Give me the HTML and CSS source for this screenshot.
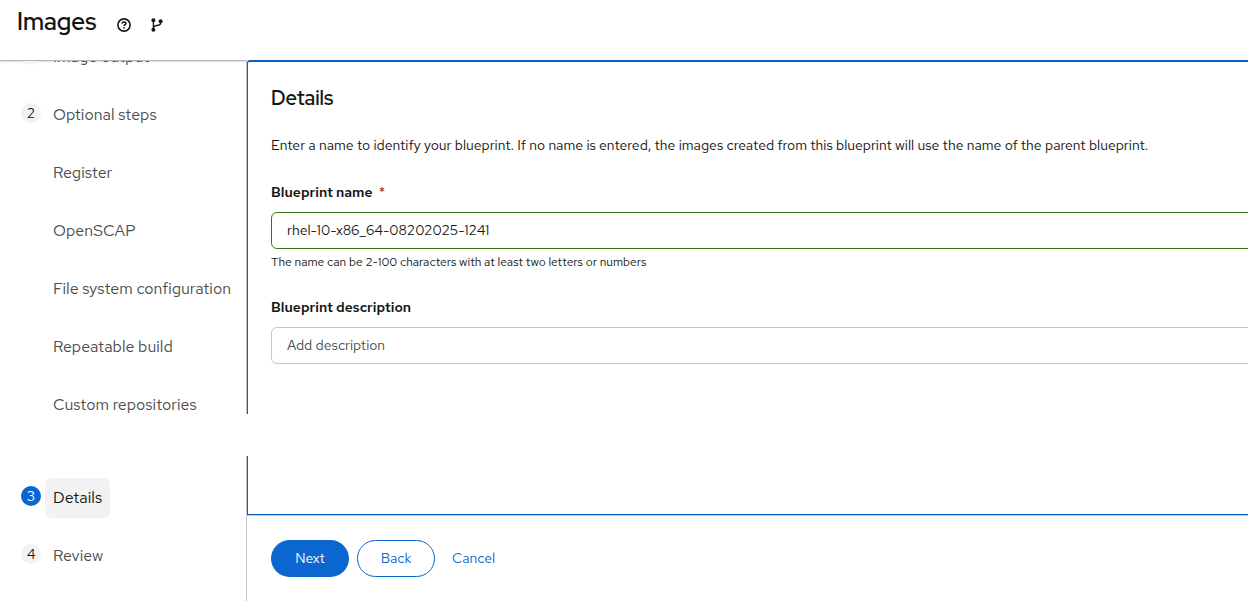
FILE: index.html
```html
<!DOCTYPE html>
<html lang="en">
<head>
<meta charset="utf-8">
<meta name="viewport" content="width=device-width, initial-scale=1">
<title>Images</title>
<link rel="stylesheet" href="styles.css">
</head>
<body>
<header class="masthead">
  <h1 class="masthead-title">Images</h1>
  <button class="icon-button" type="button" aria-label="About images">
    <svg width="14" height="14" viewBox="0 0 14 14" fill="none" stroke="currentColor">
      <circle cx="7" cy="7" r="6.1" stroke-width="1.6"/>
      <path d="M5.1 5.6C5.1 4.4 5.9 3.9 7 3.9S8.9 4.5 8.9 5.4C8.9 6.6 7 6.6 7 8.1" stroke-width="1.5"/>
      <circle cx="7" cy="9.8" r=".9" fill="currentColor" stroke="none"/>
    </svg>
  </button>
  <button class="icon-button" type="button" aria-label="Contribute">
    <svg width="12" height="14" viewBox="0 0 12 14" fill="none" stroke="currentColor">
      <path d="M2.4 2.4v9.2M9.6 3.6v1.2c0 1.6-.8 2.3-2.3 2.5L4.6 7.8C3.2 8 2.6 8.7 2.5 9.8" stroke-width="1.4"/>
      <g fill="currentColor" stroke="none"><circle cx="2.4" cy="2.2" r="2"/><circle cx="2.4" cy="11.8" r="2"/><circle cx="9.6" cy="3.2" r="2"/></g>
    </svg>
  </button>
</header>
<div class="wizard">
  <section class="row row-top">
    <nav class="steps" aria-label="Wizard steps">
      <ol class="step-list">
        <li class="step"><span class="step-number">1</span><a class="step-link" href="#output">Image output</a></li>
        <li class="step"><span class="step-number">2</span><a class="step-link" href="#optional">Optional steps</a></li>
        <li class="step substep"><a class="step-link" href="#register">Register</a></li>
        <li class="step substep"><a class="step-link" href="#openscap">OpenSCAP</a></li>
        <li class="step substep"><a class="step-link" href="#filesystem">File system configuration</a></li>
        <li class="step substep"><a class="step-link" href="#repeatable">Repeatable build</a></li>
        <li class="step substep"><a class="step-link" href="#repositories">Custom repositories</a></li>
      </ol>
    </nav>
    <main class="panel panel-top">
      <h2 class="panel-title">Details</h2>
      <p class="intro">Enter a name to identify your blueprint. If no name is entered, the images created from this blueprint will use the name of the parent blueprint.</p>
      <div class="field">
        <label class="label" for="name">Blueprint name <span class="required">*</span></label>
        <input class="input valid" id="name" type="text" value="rhel-10-x86_64-08202025-1241">
        <p class="helper">The name can be 2-100 characters with at least two letters or numbers</p>
      </div>
      <div class="field">
        <label class="label" for="description">Blueprint description</label>
        <input class="input" id="description" type="text" placeholder="Add description">
      </div>
    </main>
  </section>
  <section class="row row-bottom">
    <nav class="steps steps-end" aria-label="Final steps">
      <ol class="step-list">
        <li class="step"><span class="step-number current">3</span><a class="step-link active" href="#details" aria-current="step">Details</a></li>
        <li class="step"><span class="step-number">4</span><a class="step-link" href="#review">Review</a></li>
      </ol>
    </nav>
    <div class="side">
      <div class="panel panel-end"></div>
      <footer class="actions">
        <button class="button primary" type="button">Next</button>
        <button class="button secondary" type="button">Back</button>
        <button class="button link" type="button">Cancel</button>
      </footer>
    </div>
  </section>
</div>
</body>
</html>
```
FILE: styles.css
```css
* { box-sizing: border-box; }

body {
  margin: 0;
  background: #fff;
  color: #151515;
  font-family: "Red Hat Text", Roboto, "Liberation Sans", sans-serif;
  font-size: 14px;
  line-height: 21px;
  overflow: hidden;
}

h1, h2, p, ol { margin: 0; padding: 0; font-weight: 400; }
input, button { font: inherit; }

.masthead {
  display: flex;
  align-items: center;
  height: 60px;
  padding: 0 17px 16px;
}
.masthead-title {
  margin-right: 21px;
  font-family: "Red Hat Display", "Red Hat Text", Roboto, sans-serif;
  font-size: 24px;
  line-height: 32px;
  font-weight: 600;
}
.icon-button {
  display: flex;
  margin: 6px 20px 0 0;
  padding: 0;
  border: 0;
  background: none;
  color: #151515;
}

.wizard {
  display: flex;
  flex-direction: column;
  gap: 42px;
  min-height: calc(100vh - 60px);
}
.row {
  display: grid;
  grid-template-columns: 247px minmax(0, 1fr);
}
.row-bottom { flex: 1; }

.steps {
  padding-left: 21px;
  border-right: 1px solid #c7c7c7;
}
.row-top .steps {
  border-top: 1px solid #b5b5b5;
  box-shadow: inset 0 2px 2px -1px #ddd;
  overflow: hidden;
}
.step-list {
  display: flex;
  flex-direction: column;
  gap: 40px;
  list-style: none;
}
.row-top .step-list { margin-top: -13px; }
.steps-end { padding-top: 33px; }

.step {
  display: flex;
  align-items: center;
  gap: 4px;
  height: 18px;
}
.substep { padding-left: 24px; }
.step-number {
  width: 20px;
  height: 20px;
  flex: none;
  margin-bottom: 4px;
  border-radius: 50%;
  background: #f2f2f2;
  line-height: 20px;
  text-align: center;
}
.step-number.current { background: #0b66d0; color: #fff; }
.step-link {
  padding: 8px;
  border-radius: 6px;
  color: #4d4d4d;
  font-size: 16px;
  line-height: 24px;
  text-decoration: none;
  white-space: nowrap;
}
.step-link.active { background: #f2f2f2; color: #151515; }

.panel { border-left: 1px solid #0b5fc4; }
.panel-top {
  padding: 22px 0 0 23px;
  border-top: 2px solid #0b5fc4;
  border-top-left-radius: 3px;
}
.panel-title {
  margin-bottom: 23px;
  font-family: "Red Hat Display", "Red Hat Text", Roboto, sans-serif;
  font-size: 20px;
  line-height: 28px;
  font-weight: 600;
}
.intro { margin-bottom: 26px; }
.field { margin-right: -24px; margin-bottom: 26px; }
.label {
  display: block;
  margin-bottom: 9px;
  font-weight: 600;
}
.required { margin-left: 3px; color: #b1380b; font-weight: 500; }
.input {
  display: block;
  width: 100%;
  height: 37px;
  padding: 0 15px 1px;
  border: 1px solid #c7c7c7;
  border-radius: 6px;
  background: #fff;
  color: #151515;
}
.input.valid { border-color: #3d7317; }
.input::placeholder { color: #4d4d4d; opacity: 1; }
.helper {
  margin-top: 4px;
  font-size: 12px;
  line-height: 18px;
}

.side { display: flex; flex-direction: column; }
.panel-end {
  height: 59px;
  border-bottom: 1px solid #0b5fc4;
}
.actions {
  display: flex;
  gap: 8px;
  padding: 24px;
  border-top: 1px solid #c7c7c7;
}
.button {
  height: 37px;
  min-width: 78px;
  border: 1px solid transparent;
  border-radius: 20px;
  background: none;
  color: #0b66d0;
}
.button.primary { background: #0b66d0; color: #fff; }
.button.secondary { border-color: #0b66d0; }
.button.link { min-width: 0; padding: 0 8px; }
```
